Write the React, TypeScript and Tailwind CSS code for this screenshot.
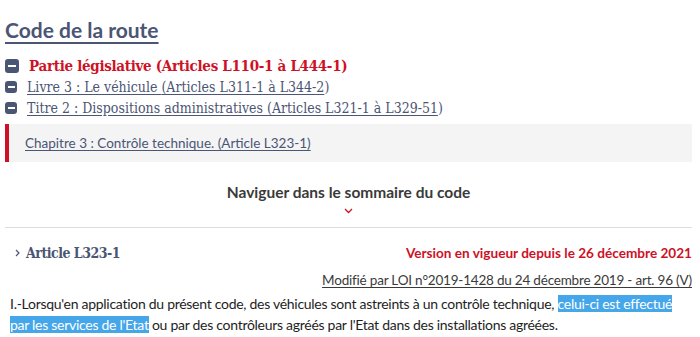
import React from "react";

const sans = { fontFamily: '"Lato", "Liberation Sans", sans-serif' };
const slab = { fontFamily: '"DejaVu Serif Condensed", "DejaVu Serif", serif' };

function Minus({ big }: { big?: boolean }) {
  return (
    <span
      className={
        "inline-flex shrink-0 items-center justify-center rounded-[3px] bg-[#4b5574] " +
        (big ? "h-[14px] w-[14px]" : "h-[12px] w-[12px]")
      }
    >
      <span className={"block h-[2px] bg-white " + (big ? "w-[8px]" : "w-[7px]")} />
    </span>
  );
}

export default function App() {
  return (
    <div className="h-[337px] w-[700px] overflow-hidden bg-white px-[5px] pr-[8px]">
      <div className="pt-[17px]">
        <h1
          className="inline-block text-[21px] font-bold leading-[26px] text-[#4b5574] underline decoration-[2px] underline-offset-[4px]"
          style={sans}
        >
          Code de la route
        </h1>
      </div>

      <div className="mt-[12px] flex items-center gap-[10px]">
        <Minus big />
        <span className="text-[15px] font-bold tracking-[-0.3px] leading-[20px] text-[#ce1126]" style={slab}>
          Partie législative (Articles L110-1 à L444-1)
        </span>
      </div>
      <div className="mt-[1px] flex items-center gap-[10px]">
        <Minus />
        <span className="text-[14px] leading-[20px] text-[#4b5574]" style={slab}>
          <span className="underline underline-offset-[2px]">Livre 3 : Le véhicule </span>
          <span className="underline underline-offset-[2px]">(Articles L311-1 à L344-2</span>)
        </span>
      </div>
      <div className="mt-[1px] flex items-center gap-[10px]">
        <Minus />
        <span className="text-[14px] leading-[20px] text-[#4b5574]" style={slab}>
          <span className="underline underline-offset-[2px]">Titre 2 : Dispositions administratives </span>
          <span className="underline underline-offset-[2px]">(Articles L321-1 à L329-51</span>)
        </span>
      </div>

      <div className="mt-[6px] flex h-[38px] items-center border-l-[4px] border-[#ce1126] bg-[#f4f4f4] pl-[16px]">
        <span className="text-[13.5px] leading-[16px] text-[#4b5574] underline underline-offset-[2px]" style={sans}>
          Chapitre 3 : Contrôle technique. (Article L323-1)
        </span>
      </div>

      <div className="mt-[20px] flex flex-col items-center">
        <span className="text-[15.5px] font-bold leading-[20px] text-[#3a3a3a]" style={sans}>
          Naviguer dans le sommaire du code
        </span>
        <svg width="9" height="6" viewBox="0 0 9 6" className="mt-[6px]">
          <path d="M1 1 L4.5 4.5 L8 1" fill="none" stroke="#ce1126" strokeWidth="1.3" />
        </svg>
      </div>

      <div className="mt-[13px] h-px bg-[#dddddd]" />

      <div className="mt-[15px] flex items-center justify-between">
        <div className="flex items-center gap-[6px] pl-[10px]">
          <svg width="5" height="8" viewBox="0 0 5 8">
            <path d="M1 1 L4 4 L1 7" fill="none" stroke="#4b5574" strokeWidth="1.2" />
          </svg>
          <span className="text-[14px] font-bold tracking-[-0.5px] leading-[20px] text-[#4b5574]" style={slab}>
            Article L323-1
          </span>
        </div>
        <span className="text-[13.6px] font-bold leading-[18px] text-[#ce1126]" style={sans}>
          Version en vigueur depuis le 26 décembre 2021
        </span>
      </div>

      <div className="mt-[8px] flex justify-end">
        <span
          className="text-[13.5px] tracking-[-0.2px] leading-[18px] text-[#3a3a3a] underline underline-offset-[2px]"
          style={sans}
        >
          Modifié par LOI n°2019-1428 du 24 décembre 2019 - art. 96 (V)
        </span>
      </div>

      <div className="mt-[4px] flex flex-col pl-[5px] text-[14px] tracking-[-0.28px] leading-[21px] text-[#1e1e1e]" style={sans}>
        <div>
          I.-Lorsqu'en application du présent code, des véhicules sont astreints à un contrôle technique,{" "}
          <span className="bg-[#45a6ea] text-white">celui-ci est effectué</span>
        </div>
        <div>
          <span className="bg-[#45a6ea] text-white">par les services de l'Etat</span> ou par des contrôleurs agréés
          par l'Etat dans des installations agréées.
        </div>
      </div>
    </div>
  );
}
